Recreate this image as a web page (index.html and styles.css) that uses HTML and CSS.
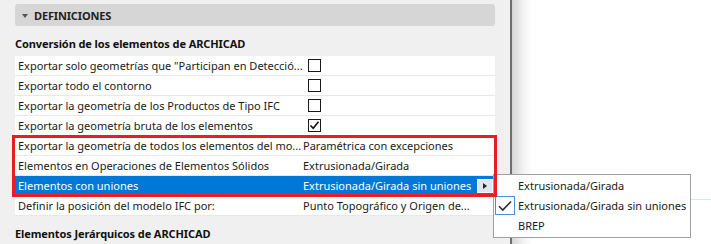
FILE: index.html
```html
<!doctype html>
<html lang="es">
  <head>
    <meta charset="UTF-8" />
    <title>Definiciones IFC</title>
    <link rel="stylesheet" href="styles.css">
  </head>
  <body>
    <div class="panel">
      <div class="section-head">
        <span class="caret"></span>
        <span>DEFINICIONES</span>
      </div>

      <div class="group-title">Conversión de los elementos de ARCHICAD</div>

      <div class="table">
        <div class="row">
          <div class="label">Exportar solo geometrías que "Participan en Detecció...</div>
          <div class="value"><span class="check"></span></div>
        </div>
        <div class="row">
          <div class="label">Exportar todo el contorno</div>
          <div class="value"><span class="check"></span></div>
        </div>
        <div class="row">
          <div class="label">Exportar la geometría de los Productos de Tipo IFC</div>
          <div class="value"><span class="check"></span></div>
        </div>
        <div class="row">
          <div class="label">Exportar la geometría bruta de los elementos</div>
          <div class="value">
            <span class="check checked">
              <svg width="11" height="11" viewBox="0 0 11 11"><path d="M1.5 5.5 L4.2 8.3 L9.5 1.8" fill="none" stroke="#111" stroke-width="1.6"/></svg>
            </span>
          </div>
        </div>
        <div class="row">
          <div class="label">Exportar la geometría de todos los elementos del mo...</div>
          <div class="value">Paramétrica con excepciones</div>
        </div>
        <div class="row">
          <div class="label">Elementos en Operaciones de Elementos Sólidos</div>
          <div class="value">Extrusionada/Girada</div>
        </div>
        <div class="row selected">
          <div class="label">Elementos con uniones</div>
          <div class="value">
            <span class="text">Extrusionada/Girada sin uniones</span>
            <span class="arrow-btn"><span class="arrow"></span></span>
          </div>
        </div>
        <div class="row">
          <div class="label">Definir la posición del modelo IFC por:</div>
          <div class="value"><span class="text">Punto Topográfico y Origen de...</span></div>
        </div>
      </div>

      <div class="group-title">Elementos Jerárquicos de ARCHICAD</div>
    </div>

    <div class="divider"></div>
    <div class="side">
      <div class="side-line"></div>
    </div>

    <div class="menu">
      <div class="menu-item">Extrusionada/Girada</div>
      <div class="menu-item current">
        <span class="menu-check">
          <svg width="14" height="12" viewBox="0 0 14 12"><path d="M1 6.2 L4.8 10 L13 1.5" fill="none" stroke="#2b2b2b" stroke-width="1.6"/></svg>
        </span>
        Extrusionada/Girada sin uniones
      </div>
      <div class="menu-item">BREP</div>
    </div>

    <div class="mark"></div>
  </body>
</html>
```

FILE: styles.css
```css
body {
  margin: 0;
  width: 711px;
  height: 244px;
  overflow: hidden;
  display: flex;
  font-family: 'Noto Sans', 'Open Sans', sans-serif;
  font-size: 11px;
  color: #1a1a1a;
  background: #fff;
}

.panel {
  width: 480px;
  padding: 4px 15px 0 15px;
  background: #f0f0f0;
  flex-shrink: 0;
}

.section-head {
  height: 22px;
  border-radius: 3px;
  background: #d6d6d6;
  display: flex;
  align-items: center;
  padding-left: 7px;
  font-weight: bold;
  font-size: 11px;
  letter-spacing: -0.15px;
  color: #222;
}

.caret {
  width: 0;
  height: 0;
  border-left: 3.5px solid transparent;
  border-right: 3.5px solid transparent;
  border-top: 4px solid #555;
  margin-right: 6px;
  margin-top: 1px;
}

.group-title {
  height: 26px;
  padding-top: 4px;
  display: flex;
  align-items: center;
  font-weight: bold;
  font-size: 11px;
  letter-spacing: -0.1px;
  color: #111;
}

.table {
  background: #fff;
}

.row {
  height: 19px;
  border-bottom: 1px solid #e8e8e8;
  display: flex;
  align-items: center;
}

.label {
  width: 282px;
  padding-left: 3px;
  padding-right: 3px;
  white-space: nowrap;
}

.value {
  flex: 1;
  display: flex;
  align-items: center;
  height: 100%;
  min-width: 0;
  white-space: nowrap;
}

.check {
  width: 11px;
  height: 11px;
  border: 1px solid #1a1a1a;
  margin-left: 5px;
  display: flex;
  align-items: center;
  justify-content: center;
  background: #fff;
}

.row.selected {
  background: #0078d7;
  color: #fff;
}

.arrow-btn {
  width: 14px;
  height: 12px;
  margin-left: auto;
  margin-right: 2px;
  background: #dfe6ee;
  border: 1px solid #f2f6fa;
  display: flex;
  align-items: center;
  justify-content: center;
}

.arrow {
  width: 0;
  height: 0;
  border-top: 3.5px solid transparent;
  border-bottom: 3.5px solid transparent;
  border-left: 4px solid #222;
}

.divider {
  width: 2px;
  background: #6e6e6e;
  flex-shrink: 0;
}

.side {
  flex: 1;
  position: relative;
  background: linear-gradient(to right, #d6d6d6 0, #f4f4f4 12px, #fff 20px);
}

.side-line {
  position: absolute;
  left: 0;
  right: 0;
  top: 199px;
  height: 1px;
  background: #cfe6f8;
}

.menu {
  position: absolute;
  left: 493px;
  top: 174px;
  width: 196px;
  height: 61px;
  padding-top: 1px;
  border: 1px solid #a0a0a0;
  background: #fff;
  z-index: 2;
}

.menu-item {
  position: relative;
  height: 20px;
  line-height: 20px;
  padding-left: 24px;
  color: #1a1a1a;
}

.menu-check {
  position: absolute;
  left: 1px;
  top: 0;
  width: 18px;
  height: 17px;
  border: 1px solid #4a90d9;
  display: flex;
  align-items: center;
  justify-content: center;
}

.mark {
  position: absolute;
  left: 12px;
  top: 135px;
  width: 485px;
  height: 62px;
  box-sizing: border-box;
  border: 3px solid #ec1c24;
  z-index: 3;
}
```
